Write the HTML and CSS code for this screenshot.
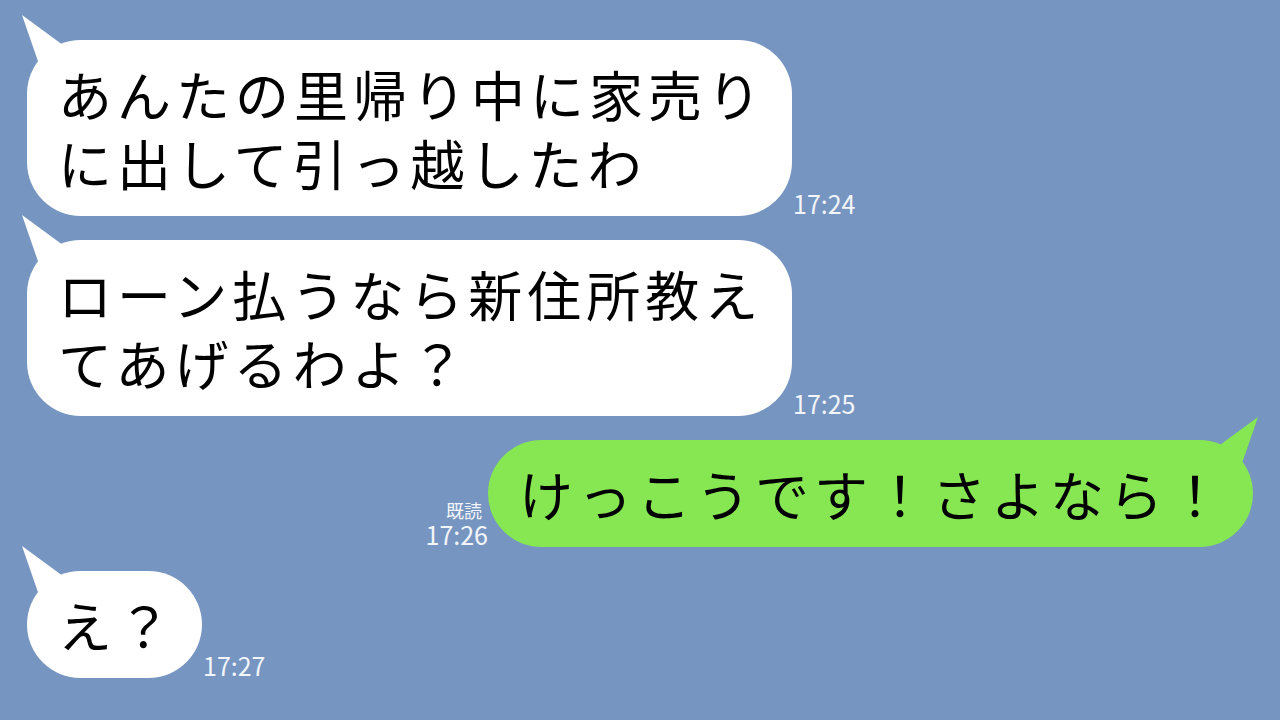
FILE: index.html
```html
<!DOCTYPE html>
<html lang="ja">
<head>
    <meta charset="UTF-8">
    <meta name="viewport" content="width=device-width, initial-scale=1.0">
    <title>トーク</title>
    <link rel="stylesheet" href="styles.css">
</head>
<body>
    <div class="chat">
        <div class="row left">
            <div class="bubble wide">
                <svg class="tail" width="50" height="60" viewBox="0 0 50 60"><polygon points="1,1 46,34 20,56"/></svg>
                あんたの里帰り中に家売り<br>に出して引っ越したわ
            </div>
            <div class="meta"><span class="time">17:24</span></div>
        </div>
        <div class="row left">
            <div class="bubble wide">
                <svg class="tail" width="50" height="60" viewBox="0 0 50 60"><polygon points="1,1 46,34 20,56"/></svg>
                ローン払うなら新住所教え<br>てあげるわよ？
            </div>
            <div class="meta"><span class="time">17:25</span></div>
        </div>
        <div class="row right">
            <div class="meta">
                <span class="read">既読</span>
                <span class="time">17:26</span>
            </div>
            <div class="bubble mine wide">
                <svg class="tail" width="50" height="60" viewBox="0 0 50 60"><polygon points="49,1 4,34 30,56"/></svg>
                けっこうです！さよなら！
            </div>
        </div>
        <div class="row left">
            <div class="bubble">
                <svg class="tail" width="50" height="60" viewBox="0 0 50 60"><polygon points="1,1 46,34 20,56"/></svg>
                え？
            </div>
            <div class="meta"><span class="time">17:27</span></div>
        </div>
    </div>
</body>
</html>
```

FILE: styles.css
```css
* {
    box-sizing: border-box;
}
body {
    margin: 0;
    width: 1280px;
    height: 720px;
    overflow: hidden;
    background-color: #7795c1;
    font-family: "Noto Sans CJK JP", "Noto Sans", sans-serif;
}
.chat {
    display: flex;
    flex-direction: column;
    gap: 24px;
    padding: 40px 27px 0 27px;
}
.row {
    display: flex;
    align-items: flex-end;
}
.row.right {
    justify-content: flex-end;
}
.bubble {
    position: relative;
    background-color: #fff;
    color: #000;
    font-size: 54px;
    line-height: 69px;
    letter-spacing: 5px;
    padding: 19px 26px 19px 31px;
    border-radius: 54px;
    white-space: nowrap;
}
.bubble.wide {
    width: 765px;
}
.bubble.mine {
    background-color: #86e752;
}
.tail {
    position: absolute;
    left: -6px;
    top: -26px;
    fill: #fff;
}
.mine .tail {
    left: auto;
    right: -6px;
    top: -24px;
    fill: #86e752;
}
.meta {
    display: flex;
    flex-direction: column;
    color: #f2f5fa;
    line-height: 1;
}
.left .meta {
    margin-left: 1px;
}
.right .meta {
    align-items: flex-end;
    margin-right: 0;
}
.time {
    font-size: 25px;
    line-height: 25px;
}
.read {
    font-size: 18px;
    line-height: 24px;
    margin-right: 6px;
}
```
